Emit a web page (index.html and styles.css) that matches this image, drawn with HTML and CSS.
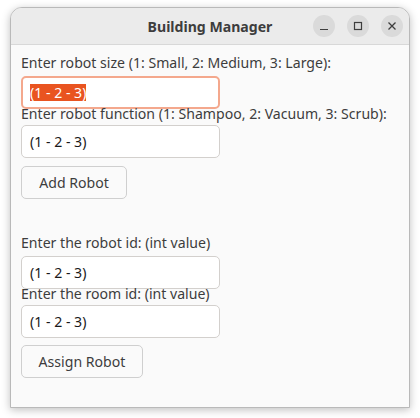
FILE: index.html
```html
<!DOCTYPE html>
<html>
<head>
<meta charset="utf-8">
<link rel="stylesheet" href="styles.css">
</head>
<body>
<div class="window">
  <div class="titlebar">
    <div class="title">Building Manager</div>
    <div class="controls">
      <span class="ctl"><svg width="22" height="22" viewBox="0 0 22 22"><path d="M7 14.5h8" stroke="#3d3d3d" stroke-width="1.2"/></svg></span>
      <span class="ctl"><svg width="22" height="22" viewBox="0 0 22 22"><rect x="7.5" y="7.5" width="7" height="7" fill="none" stroke="#3d3d3d" stroke-width="1.2"/></svg></span>
      <span class="ctl"><svg width="22" height="22" viewBox="0 0 22 22"><path d="M7.5 7.5l7 7M14.5 7.5l-7 7" stroke="#3d3d3d" stroke-width="1.3"/></svg></span>
    </div>
  </div>
  <div class="content">
    <div class="label l1">Enter robot size (1: Small, 2: Medium, 3: Large):</div>
    <div class="entry focus"><span class="sel">(1 - 2 - 3)</span></div>
    <div class="label l2">Enter robot function (1: Shampoo, 2: Vacuum, 3: Scrub):</div>
    <div class="entry">(1 - 2 - 3)</div>
    <div class="button b1">Add Robot</div>
    <div class="label l3">Enter the robot id: (int value)</div>
    <div class="entry">(1 - 2 - 3)</div>
    <div class="label l4">Enter the room id: (int value)</div>
    <div class="entry">(1 - 2 - 3)</div>
    <div class="button b2">Assign Robot</div>
  </div>
</div>
</body>
</html>
```

FILE: styles.css
```css
html, body {
  margin: 0;
  padding: 0;
  background: #ffffff;
}
body {
  width: 420px;
  height: 418px;
  overflow: hidden;
  font-family: "Noto Sans", "Open Sans", sans-serif;
}
.window {
  margin: 7px 0 0 10px;
  width: 400px;
  height: 401px;
  box-sizing: border-box;
  border: 1px solid #b9b9b9;
  border-radius: 12px 12px 0 0;
  background: #fafafa;
  box-shadow: 0 2px 8px rgba(0,0,0,0.25);
  overflow: hidden;
  display: flex;
  flex-direction: column;
}
.titlebar {
  height: 37px;
  box-sizing: border-box;
  background: #ebebeb;
  border-bottom: 1px solid #d8d8d8;
  position: relative;
  display: flex;
  align-items: center;
  justify-content: center;
}
.title {
  font-weight: bold;
  font-size: 14.1px;
  color: #3d3d3d;
}
.controls {
  position: absolute;
  right: 6px;
  top: 7px;
  display: flex;
  gap: 12px;
}
.ctl {
  width: 22px;
  height: 22px;
  border-radius: 50%;
  background: #dadada;
  display: block;
}
.ctl svg { display: block; }
.content {
  padding: 9px 0 0 10px;
  display: flex;
  flex-direction: column;
  align-items: flex-start;
}
.label {
  font-size: 14.1px;
  line-height: 18px;
  color: #3d3d3d;
  white-space: nowrap;
}
.entry {
  width: 199px;
  height: 33px;
  box-sizing: border-box;
  background: #ffffff;
  border: 1px solid #d3d0cd;
  border-radius: 5px;
  font-size: 14.1px;
  color: #1a1a1a;
  padding-left: 8px;
  display: flex;
  align-items: center;
}
.entry.focus {
  border: 2px solid #f4a88d;
  padding-left: 7px;
}
.sel {
  background: #e95420;
  color: #ffffff;
  line-height: 17px;
}
.button {
  height: 33px;
  box-sizing: border-box;
  border: 1px solid #cfcfcf;
  border-radius: 5px;
  background: #fafafa;
  font-size: 14.1px;
  color: #3d3d3d;
  display: flex;
  align-items: center;
  justify-content: center;
}
.l1 { margin-bottom: 4px; }
.l2 { margin-top: -4px; margin-bottom: 2px; }
.b1 { width: 106px; margin-top: 8px; }
.l3 { margin-top: 35px; margin-bottom: 4px; }
.l4 { margin-top: -4px; margin-bottom: 2px; }
.b2 { width: 122px; margin-top: 7px; }
```
